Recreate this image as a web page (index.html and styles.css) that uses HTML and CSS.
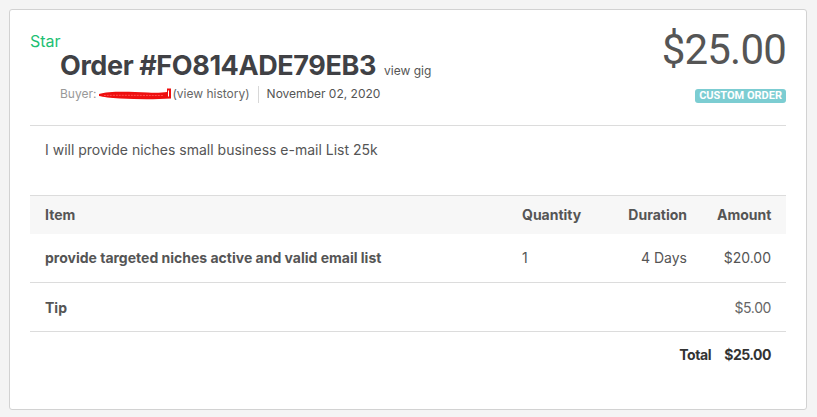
FILE: index.html
```html
<!DOCTYPE html>
<html>
<head>
<meta charset="utf-8">
<link rel="stylesheet" href="styles.css">
</head>
<body>
<div class="card">
  <div class="header">
    <div class="head-left">
      <div class="star">Star</div>
      <div class="title-row">
        <h1 class="title">Order #FO814ADE79EB3</h1>
        <a class="view-gig">view gig</a>
      </div>
      <div class="meta">
        <span class="buyer-label">Buyer:</span>
        <span class="redact"><svg width="74" height="14" viewBox="0 0 74 14"><path d="M1 7 C 10 4, 30 4.5, 50 5.5 C 58 6, 65 5.5, 69 5 L 69 1.5 L 73 1.5 L 73 11.5 C 58 12.5, 40 12.5, 22 11.5 C 12 11, 5 10, 1 9 Z" fill="#ee0f0f"/><path d="M70.5 3.5 L 70.5 9.5" stroke="#fff" stroke-width="1"/><path d="M6 8.5 C 20 8, 40 8.5, 66 8.5" stroke="#ff5050" stroke-width="1" stroke-dasharray="2 1" fill="none"/></svg></span>
        <a class="history">(view history)</a>
        <span class="sep"></span>
        <span class="date">November 02, 2020</span>
      </div>
    </div>
    <div class="head-right">
      <div class="price">$25.00</div>
      <span class="badge">CUSTOM ORDER</span>
    </div>
  </div>
  <p class="desc">I will provide niches small business e-mail List 25k</p>
  <table class="items">
    <colgroup>
      <col>
      <col class="c-qty">
      <col class="c-dur">
      <col class="c-amt">
    </colgroup>
    <thead>
      <tr>
        <th class="left">Item</th>
        <th class="left">Quantity</th>
        <th class="right">Duration</th>
        <th class="right">Amount</th>
      </tr>
    </thead>
    <tbody>
      <tr>
        <td class="left strong">provide targeted niches active and valid email list</td>
        <td class="left">1</td>
        <td class="right">4 Days</td>
        <td class="right">$20.00</td>
      </tr>
      <tr>
        <td class="left strong">Tip</td>
        <td></td>
        <td></td>
        <td class="right narrow">$5.00</td>
      </tr>
      <tr class="total-row">
        <td class="right total" colspan="4"><span class="total-label">Total</span><span class="total-val">$25.00</span></td>
      </tr>
    </tbody>
  </table>
</div>
</body>
</html>
```
FILE: styles.css
```css
* { box-sizing: border-box; }
html, body { margin: 0; }
body {
  background: #f4f4f4;
  padding: 9px 10px 8px 9px;
  font-family: Inter, "Liberation Sans", sans-serif;
  color: #555;
}
.card {
  background: #fff;
  border: 1px solid #d2d2d2;
  border-radius: 3px;
  padding: 19px 20px 30px 20px;
  height: 401px;
}
.header {
  display: flex;
  justify-content: space-between;
  align-items: flex-start;
  border-bottom: 1px solid #dcdcdc;
  height: 97px;
}
.star {
  color: #1dbf73;
  font-size: 16px;
  line-height: 22px;
  padding-top: 1px;
}
.title-row {
  display: flex;
  align-items: baseline;
  margin-left: 30px;
  margin-top: -2px;
  gap: 8px;
}
.title {
  margin: 0;
  font-size: 27px;
  font-weight: 700;
  color: #404145;
  line-height: 32px;
  letter-spacing: -0.4px;
}
.view-gig {
  font-size: 12px;
  color: #555;
}
.meta {
  display: flex;
  align-items: center;
  margin-left: 30px;
  margin-top: 3px;
  font-size: 12px;
  line-height: 18px;
}
.buyer-label { color: #999; }
.redact { display: inline-flex; margin: 0 0 0 2px; }
.history { color: #666; margin-left: 0; }
.sep {
  width: 1px;
  height: 17px;
  background: #d8d8d8;
  margin: 0 8px;
}
.date { color: #555; }
.head-right {
  display: flex;
  flex-direction: column;
  align-items: flex-end;
}
.price {
  font-family: Roboto, "Liberation Sans", sans-serif;
  font-size: 42px;
  line-height: 46px;
  color: #555;
  letter-spacing: -0.8px;
  margin-top: -2px;
}
.badge {
  margin-top: 16px;
  background: #7ccdd2;
  color: #fff;
  font-family: Roboto, "Liberation Sans", sans-serif;
  font-weight: 700;
  font-size: 11px;
  line-height: 14px;
  padding: 0 4px;
  border-radius: 3px;
}
.desc {
  margin: 0;
  padding: 14px 15px 0 15px;
  font-size: 14px;
  line-height: 20px;
  color: #555;
  height: 69px;
}
.items {
  width: 100%;
  border-collapse: collapse;
  table-layout: fixed;
  font-size: 14px;
}
.c-qty { width: 95px; }
.c-dur { width: 100px; }
.c-amt { width: 84px; }
.items thead tr {
  background: #f7f7f7;
  border-top: 1px solid #dcdcdc;
}
.items th {
  font-weight: 700;
  color: #555;
  height: 38px;
  padding: 0 15px;
}
.items td {
  height: 49px;
  padding: 0 15px;
  color: #555;
}
.items tbody tr { border-bottom: 1px solid #dcdcdc; }
.items tbody tr.total-row { border-bottom: none; }
.items tbody tr.total-row td { height: 46px; }
.items td.strong { font-weight: 700; }
.items td.narrow { letter-spacing: -0.4px; color: #666; }
.left { text-align: left; }
.right { text-align: right; }
.items td.total { font-weight: 700; color: #333; }
.total-label { letter-spacing: -0.4px; margin-right: 13px; }
.total-val { letter-spacing: -0.5px; }
```
